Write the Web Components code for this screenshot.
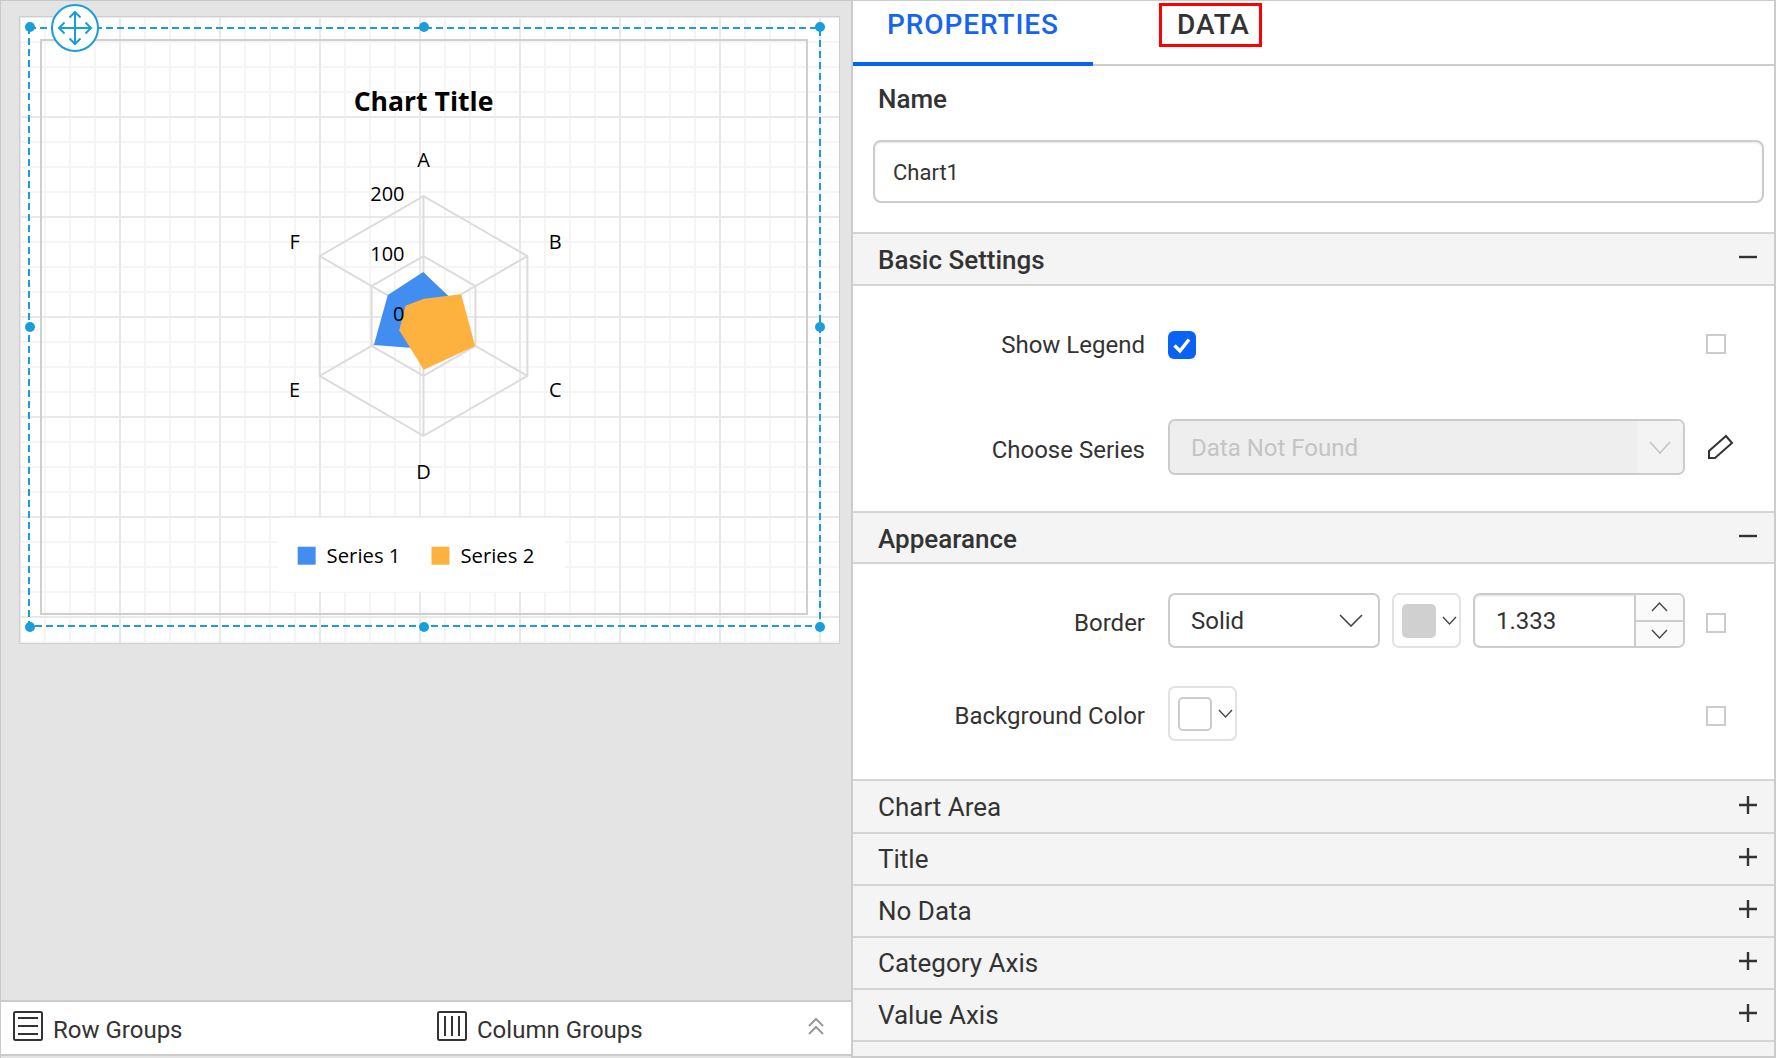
<!DOCTYPE html>
<html>
<head>
<meta charset="utf-8">
<style>
  html, body { margin: 0; height: 100%; overflow: hidden; background: #fff; }
</style>
</head>
<body>
<report-designer>
  <report-canvas slot="canvas"></report-canvas>
  <group-bar slot="bar"></group-bar>
  <props-panel slot="panel"></props-panel>
</report-designer>

<script>
const CHEVRON = (w, h, c, sw) => `<svg width="${w}" height="${h}" viewBox="0 0 ${w} ${h}" style="display:block"><path d="M1 1 L${w / 2} ${h - 1} L${w - 1} 1" fill="none" stroke="${c}" stroke-width="${sw}"/></svg>`;
const CHEVRON_UP = (w, h, c, sw) => `<svg width="${w}" height="${h}" viewBox="0 0 ${w} ${h}" style="display:block"><path d="M1 ${h - 1} L${w / 2} 1 L${w - 1} ${h - 1}" fill="none" stroke="${c}" stroke-width="${sw}"/></svg>`;

class ReportDesigner extends HTMLElement {
  constructor() {
    super();
    this.attachShadow({ mode: 'open' });
    this.shadowRoot.innerHTML = `
      <style>
        :host { display: grid; grid-template-columns: 851px 925px; height: 1058px; }
        .left {
          display: flex;
          flex-direction: column;
          background: #e4e4e4;
          border-left: 1px solid #c8c8c8;
          border-top: 1px solid #c8c8c8;
          box-sizing: border-box;
          height: 1058px;
        }
        .stage { flex: 1; padding: 15px 0 0 18px; }
        .foot { padding-bottom: 2px; }
      </style>
      <div class="left">
        <div class="stage"><slot name="canvas"></slot></div>
        <div class="foot"><slot name="bar"></slot></div>
      </div>
      <slot name="panel"></slot>
    `;
  }
}
customElements.define('report-designer', ReportDesigner);

class ReportCanvas extends HTMLElement {
  constructor() {
    super();
    this.attachShadow({ mode: 'open' });
    this.shadowRoot.innerHTML = `
      <style>
        :host {
          display: block;
          position: relative;
          width: 821px;
          height: 628px;
          box-sizing: border-box;
          border: 1px solid #cfcfcf;
          background-color: #fff;
          background-image:
            linear-gradient(to right, #e9e9e9 2px, transparent 2px),
            linear-gradient(to bottom, #e9e9e9 2px, transparent 2px),
            linear-gradient(to right, #f5f5f5 2px, transparent 2px),
            linear-gradient(to bottom, #f5f5f5 2px, transparent 2px);
          background-size: 100px 100px, 100px 100px, 25px 25px, 25px 25px;
          background-position: -1px -1px;
          padding: 22px 31px 28px 20px;
        }
        .report {
          box-sizing: border-box;
          height: 100%;
          border: 2px solid #cfcfcf;
        }
        svg.chart { display: block; width: 100%; height: 100%; }
        svg.sel { position: absolute; left: -1px; top: -1px; width: 821px; height: 628px; overflow: visible; pointer-events: none; }
        text { font-family: "Open Sans", "Liberation Sans", sans-serif; fill: #000; }
      </style>
      <div class="report">
        <svg class="chart" viewBox="42 41 765 572">
          <rect x="278" y="518" width="288" height="74" fill="#fff"/>
          <text x="424" y="111" text-anchor="middle" font-weight="700" style="font-size:26.6px">Chart Title</text>

          <g fill="none" stroke="#dcdcdc" stroke-width="2">
            <polygon points="424,196 528,256 528,376 424,436 320,376 320,256"/>
            <polygon points="424,256 476,286 476,346 424,376 372,346 372,286"/>
            <path d="M424 196V436M320 256L528 376M320 376L528 256"/>
          </g>
          <polygon fill="#428df0" points="423.7,272 449,296 460,320 430,353 410,347.7 374.3,345 388.3,295"/>
          <polygon fill="#fdb240" points="461.7,294.3 475.7,346 424.3,369.7 399.7,330.3 406,305.7 424.3,298.7"/>

          <g font-size="20" text-anchor="middle">
            <text x="424" y="167">A</text>
            <text x="556" y="249">B</text>
            <text x="556" y="397">C</text>
            <text x="424" y="479">D</text>
            <text x="295" y="397">E</text>
            <text x="295" y="249">F</text>
          </g>
          <g font-size="20" text-anchor="end">
            <text x="405" y="201">200</text>
            <text x="405" y="261">100</text>
            <text x="405" y="321">0</text>
          </g>
          <rect x="298" y="547" width="18" height="18" fill="#428df0"/>
          <text x="327" y="563" style="font-size:20.3px">Series 1</text>
          <rect x="432" y="547" width="18" height="18" fill="#fdb240"/>
          <text x="461" y="563" style="font-size:20.3px">Series 2</text>
        </svg>
      </div>
      <svg class="sel" viewBox="19 16 821 628">
        <rect x="29" y="28" width="791" height="598" fill="none" stroke="#1a9edb" stroke-width="2" stroke-dasharray="7 4"/>
        <g fill="#1a9edb">
          <circle cx="30" cy="27" r="5"/><circle cx="424" cy="27" r="5"/><circle cx="820" cy="27" r="5"/>
          <circle cx="30" cy="327" r="5"/><circle cx="820" cy="327" r="5"/>
          <circle cx="30" cy="627" r="5"/><circle cx="424" cy="627" r="5"/><circle cx="820" cy="627" r="5"/>
        </g>
        <circle cx="75" cy="28" r="23" fill="#fff" stroke="#1a9edb" stroke-width="2"/>
        <path d="M59 28H91M75 12V44M64.5 22.5L59 28L64.5 33.5M85.5 22.5L91 28L85.5 33.5M69.5 17.5L75 12L80.5 17.5M69.5 38.5L75 44L80.5 38.5" fill="none" stroke="#1a9edb" stroke-width="2"/>
      </svg>
    `;
  }
}
customElements.define('report-canvas', ReportCanvas);

class GroupBar extends HTMLElement {
  constructor() {
    super();
    this.attachShadow({ mode: 'open' });
    this.shadowRoot.innerHTML = `
      <style>
        :host {
          display: flex;
          align-items: center;
          height: 52px;
          background: #fff;
          border-top: 2px solid #cccccc;
          border-bottom: 2px solid #cccccc;
          padding-left: 12px;
          font: 400 24px Roboto, "Liberation Sans", sans-serif;
          color: #333;
        }
        .group { display: flex; align-items: center; gap: 10px; }
        .row { width: 424px; }
        .col { width: 371px; }
        span { position: relative; top: 2px; }
        svg { display: block; flex: none; margin-top: -4px; }
      </style>
      <div class="group row">
        <svg width="30" height="30" viewBox="0 0 30 30" fill="none" stroke="#333" stroke-width="2">
          <rect x="1" y="1" width="28" height="28" rx="1.5"/>
          <path d="M5 7H25M5 15H25M5 23H25"/>
        </svg>
        <span>Row Groups</span>
      </div>
      <div class="group col">
        <svg width="30" height="30" viewBox="0 0 30 30" fill="none" stroke="#333" stroke-width="2">
          <rect x="1" y="1" width="28" height="28" rx="1.5"/>
          <path d="M8 5V25M15 5V25M22 5V25"/>
        </svg>
        <span>Column Groups</span>
      </div>
      <svg width="16" height="19" viewBox="0 0 16 19" fill="none" stroke="#999" stroke-width="2">
        <path d="M1 9L8 2L15 9M1 17L8 10L15 17"/>
      </svg>
    `;
  }
}
customElements.define('group-bar', GroupBar);

class PropTabs extends HTMLElement {
  constructor() {
    super();
    this.attachShadow({ mode: 'open' });
    this.shadowRoot.innerHTML = `
      <style>
        :host {
          display: flex;
          box-sizing: border-box;
          height: 66px;
          border-top: 1px solid #ccc;
          border-bottom: 2px solid #ccc;
          font: 500 28px Roboto, "Liberation Sans", sans-serif;
          letter-spacing: .9px;
        }
        .tab { box-sizing: border-box; position: relative; height: 65px; line-height: 47px; }
        .active { width: 240px; padding-left: 34px; color: #1565ef; border-bottom: 4px solid #0a62f5; }
        .other { padding-left: 84px; color: #333; }
        .mark {
          position: absolute;
          left: 66px;
          top: 2px;
          width: 103px;
          height: 44px;
          box-sizing: border-box;
          border: 3px solid #f00;
        }
      </style>
      <div class="tab active">PROPERTIES</div>
      <div class="tab other">DATA<div class="mark"></div></div>
    `;
  }
}
customElements.define('prop-tabs', PropTabs);

class PropSection extends HTMLElement {
  constructor() {
    super();
    this.attachShadow({ mode: 'open' });
    const open = this.hasAttribute('open');
    this.shadowRoot.innerHTML = `
      <style>
        :host { display: block; }
        .head {
          display: flex;
          align-items: center;
          justify-content: space-between;
          box-sizing: border-box;
          height: ${this.getAttribute('height') || 52}px;
          padding: 0 17px 0 25px;
          background: #f4f4f4;
          border-top: 2px solid #d4d4d4;
          font: ${open ? 500 : 400} 26px Roboto, "Liberation Sans", sans-serif;
          color: #333;
        }
        .head.open { border-bottom: 2px solid #d4d4d4; }
        span { position: relative; top: ${open ? 1 : 0}px; }
        svg { display: block; position: relative; top: -2px; }
        .body { display: ${open ? 'block' : 'none'}; }
      </style>
      <div class="head ${open ? 'open' : ''}">
        <span>${this.getAttribute('title')}</span>
        <svg width="18" height="18" viewBox="0 0 18 18" stroke="#333" stroke-width="2.4">
          <path d="${open ? 'M0 9H18' : 'M0 9H18M9 0V18'}"/>
        </svg>
      </div>
      <div class="body"><slot></slot></div>
    `;
  }
}
customElements.define('prop-section', PropSection);

class PropRow extends HTMLElement {
  constructor() {
    super();
    this.attachShadow({ mode: 'open' });
    this.shadowRoot.innerHTML = `
      <style>
        :host {
          display: grid;
          grid-template-columns: 292px 540px auto;
          align-items: center;
          font: 400 24px Roboto, "Liberation Sans", sans-serif;
          color: #333;
        }
        .label { text-align: right; padding-top: var(--nudge, 5px); }
        .control { display: flex; gap: 12px; padding-left: 23px; }
        .side { padding-left: 21px; margin-top: var(--side, 5px); }
      </style>
      <div class="label">${this.getAttribute('label')}</div>
      <div class="control"><slot></slot></div>
      <div class="side"><slot name="side"></slot></div>
    `;
  }
}
customElements.define('prop-row', PropRow);

class TickBox extends HTMLElement {
  constructor() {
    super();
    this.attachShadow({ mode: 'open' });
    this.shadowRoot.innerHTML = `
      <style>
        :host { display: block; box-sizing: border-box; width: 20px; height: 20px; border: 2px solid #cccccc; background: #fff; }
      </style>
    `;
  }
}
customElements.define('tick-box', TickBox);

class CheckMark extends HTMLElement {
  constructor() {
    super();
    this.attachShadow({ mode: 'open' });
    this.shadowRoot.innerHTML = `
      <style>
        :host { display: block; width: 28px; height: 28px; border-radius: 6px; background: #0a62f5; }
        svg { display: block; }
      </style>
      <svg width="28" height="28" viewBox="0 0 28 28"><path d="M6.5 14.5L12 20L21 8.5" fill="none" stroke="#fff" stroke-width="3.4"/></svg>
    `;
  }
}
customElements.define('check-mark', CheckMark);

class DropDown extends HTMLElement {
  constructor() {
    super();
    this.attachShadow({ mode: 'open' });
    const disabled = this.hasAttribute('disabled');
    this.shadowRoot.innerHTML = `
      <style>
        :host {
          display: flex;
          flex: none;
          box-sizing: border-box;
          height: ${disabled ? 56 : 55}px;
          width: ${this.getAttribute('width')}px;
          border: 2px solid #cccccc;
          border-radius: 7px;
          overflow: hidden;
          font: 400 24px Roboto, "Liberation Sans", sans-serif;
          color: ${disabled ? '#c4c4c4' : '#333'};
          background: ${disabled ? '#eeeeee' : '#fff'};
        }
        .text { flex: 1; padding: 2px 0 0 21px; line-height: ${disabled ? 50 : 49}px; }
        .arrow {
          display: flex;
          align-items: center;
          justify-content: center;
          width: ${disabled ? 46 : 55}px;
          background: ${disabled ? '#f3f3f3' : 'transparent'};
        }
      </style>
      <div class="text"><slot></slot></div>
      <div class="arrow">${disabled ? CHEVRON(22, 13, '#c4c4c4', 1.6) : CHEVRON(24, 13, '#444', 1.6)}</div>
    `;
  }
}
customElements.define('drop-down', DropDown);

class ColorPick extends HTMLElement {
  constructor() {
    super();
    this.attachShadow({ mode: 'open' });
    const color = this.getAttribute('color');
    this.shadowRoot.innerHTML = `
      <style>
        :host {
          display: flex;
          flex: none;
          align-items: center;
          box-sizing: border-box;
          width: 69px;
          height: 55px;
          padding-left: 8px;
          border: 2px solid #e2e2e2;
          border-radius: 7px;
          background: #fff;
        }
        .swatch {
          box-sizing: border-box;
          width: 34px;
          height: 34px;
          margin-right: 6px;
          border-radius: 5px;
          border: 2px solid ${color === '#fff' ? '#cccccc' : color};
          background: ${color};
        }
      </style>
      <div class="swatch"></div>
      ${CHEVRON(15, 9, '#444', 1.3)}
    `;
  }
}
customElements.define('color-pick', ColorPick);

class NumberBox extends HTMLElement {
  constructor() {
    super();
    this.attachShadow({ mode: 'open' });
    this.shadowRoot.innerHTML = `
      <style>
        :host {
          display: flex;
          flex: none;
          box-sizing: border-box;
          width: 212px;
          height: 55px;
          border: 2px solid #cccccc;
          border-radius: 7px;
          overflow: hidden;
          font: 400 24px Roboto, "Liberation Sans", sans-serif;
          color: #333;
          box-shadow: inset 0 1px 2px rgba(0, 0, 0, .12);
        }
        .text { flex: 1; padding: 2px 0 0 21px; line-height: 49px; }
        .spin { display: flex; flex-direction: column; width: 47px; border-left: 2px solid #cccccc; background: #fafafa; }
        .spin div { flex: 1; display: flex; align-items: center; justify-content: center; }
        .spin div + div { border-top: 2px solid #cccccc; }
      </style>
      <div class="text"><slot></slot></div>
      <div class="spin">
        <div>${CHEVRON_UP(17, 10, '#444', 1.3)}</div>
        <div>${CHEVRON(17, 10, '#444', 1.3)}</div>
      </div>
    `;
  }
}
customElements.define('number-box', NumberBox);

class PropsPanel extends HTMLElement {
  constructor() {
    super();
    this.attachShadow({ mode: 'open' });
    this.shadowRoot.innerHTML = `
      <style>
        :host {
          display: block;
          box-sizing: border-box;
          height: 1058px;
          border-left: 2px solid #cccccc;
          border-right: 2px solid #cccccc;
          border-bottom: 2px solid #cccccc;
          background: #fff;
          overflow: hidden;
        }
        .name { padding: 17px 10px 29px 20px; font-family: Roboto, "Liberation Sans", sans-serif; color: #333; }
        .name h3 { margin: 0 0 25px 5px; font-size: 26px; font-weight: 500; line-height: 32px; }
        .field {
          box-sizing: border-box;
          height: 63px;
          padding-left: 18px;
          line-height: 61px;
          font-size: 22px;
          border: 2px solid #cccccc;
          border-radius: 8px;
          box-shadow: inset 0 1px 2px rgba(0, 0, 0, .1);
        }
        .basic { padding: 45px 0 36px; display: flex; flex-direction: column; gap: 60px; }
        .look { padding: 29px 0 38px; display: flex; flex-direction: column; gap: 38px; }
        .tail { height: 15px; background: #f4f4f4; border-top: 2px solid #d4d4d4; }
        .flat { --nudge: 0px; --side: -2px; }
        svg { display: block; margin-top: -5px; }
      </style>
      <prop-tabs></prop-tabs>
      <div class="name">
        <h3>Name</h3>
        <div class="field">Chart1</div>
      </div>
      <prop-section title="Basic Settings" open height="54">
        <div class="basic">
          <prop-row label="Show Legend" class="flat">
            <check-mark></check-mark>
            <tick-box slot="side"></tick-box>
          </prop-row>
          <prop-row label="Choose Series">
            <drop-down width="517" disabled>Data Not Found</drop-down>
            <svg slot="side" width="28" height="28" viewBox="0 0 28 28" fill="none" stroke="#333" stroke-width="2">
              <path d="M3 18L20 3L26 10L9 25H3Z"/>
            </svg>
          </prop-row>
        </div>
      </prop-section>
      <prop-section title="Appearance" open height="53">
        <div class="look">
          <prop-row label="Border">
            <drop-down width="212">Solid</drop-down>
            <color-pick color="#d0d0d0"></color-pick>
            <number-box>1.333</number-box>
            <tick-box slot="side"></tick-box>
          </prop-row>
          <prop-row label="Background Color">
            <color-pick color="#fff"></color-pick>
            <tick-box slot="side"></tick-box>
          </prop-row>
        </div>
      </prop-section>
      <prop-section title="Chart Area" height="53"></prop-section>
      <prop-section title="Title"></prop-section>
      <prop-section title="No Data"></prop-section>
      <prop-section title="Category Axis"></prop-section>
      <prop-section title="Value Axis"></prop-section>
      <div class="tail"></div>
    `;
  }
}
customElements.define('props-panel', PropsPanel);
</script>
</body>
</html>
